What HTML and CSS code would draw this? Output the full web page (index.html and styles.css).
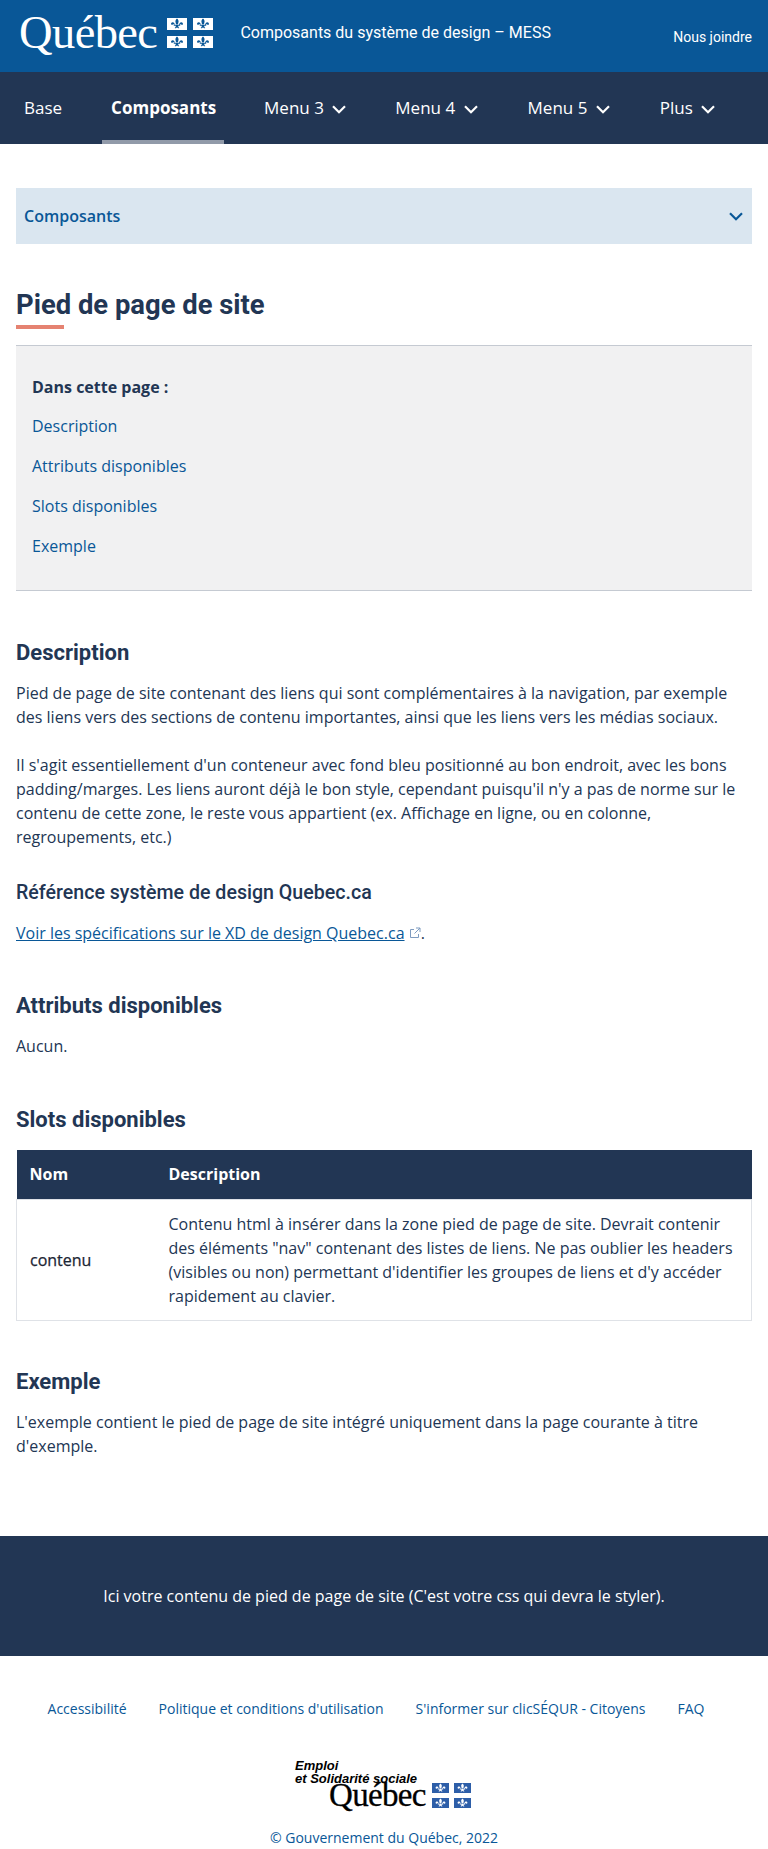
FILE: index.html
```html
<!DOCTYPE html>
<html lang="fr">
<head>
  <meta charset="UTF-8" />
  <meta name="viewport" content="width=device-width, initial-scale=1.0"/>
  <title>Pied de page de site</title>
  <link rel="stylesheet" href="styles.css">
</head>
<body>
  <svg class="defs" width="0" height="0" aria-hidden="true">
    <symbol id="fleur" viewBox="0 0 20 12">
      <path d="M10 .6c1.200 1 1.800 2.200 1.500 3.500-.2.900-.5 1.500-.5 2.200H9c0-.7-.3-1.300-.5-2.200C8.200 2.800 8.800 1.600 10 .6zM8 7.100c-.3-1.100-.8-2.500-1.900-2.800-1.100-.3-2.200.6-2 1.700.1.800 1 1.200 1.600.8-.2-.6.300-1 .8-.6.300.3.500.6.600.9zM12 7.100c.3-1.100.8-2.500 1.900-2.800 1.100-.3 2.200.6 2 1.700-.1.800-1 1.200-1.600.8.200-.6-.3-1-.8-.6-.3.300-.5.600-.6.900zM6.800 6.800h6.400v1h-2c0 1 .4 1.800 1.100 2.200-.9.500-1.800.2-2.300-.7-.5.900-1.400 1.200-2.300.7.700-.4 1.100-1.200 1.100-2.200h-2z"/>
    </symbol>
    <symbol id="chevron" viewBox="1 1 14 8.500">
      <path d="M2 2l6 6 6-6" fill="none" stroke="currentColor" stroke-width="2.200"/>
    </symbol>
  </svg>

  <header class="topbar">
    <a class="logo" href="#">
      <span class="logo-word">Québec</span>
      <span class="flag flag-white">
        <i><svg><use href="#fleur"/></svg></i><i><svg><use href="#fleur"/></svg></i>
        <i><svg><use href="#fleur"/></svg></i><i><svg><use href="#fleur"/></svg></i>
      </span>
    </a>
    <div class="site-title">Composants du système de design – MESS</div>
    <a class="contact" href="#">Nous joindre</a>
  </header>

  <nav class="mainnav">
    <a href="#" class="nav-base">Base</a>
    <a href="#" class="nav-active">Composants</a>
    <a href="#" class="nav-m3">Menu 3 <svg class="nav-chev"><use href="#chevron"/></svg></a>
    <a href="#" class="nav-m4">Menu 4 <svg class="nav-chev"><use href="#chevron"/></svg></a>
    <a href="#" class="nav-m5">Menu 5 <svg class="nav-chev"><use href="#chevron"/></svg></a>
    <a href="#" class="nav-plus">Plus <svg class="nav-chev"><use href="#chevron"/></svg></a>
  </nav>

  <main class="content">
    <div class="section-select">
      <span>Composants</span>
      <svg class="select-chev"><use href="#chevron"/></svg>
    </div>

    <h1>Pied de page de site</h1>

    <div class="toc">
      <p class="toc-title">Dans cette page :</p>
      <a href="#">Description</a>
      <a href="#">Attributs disponibles</a>
      <a href="#">Slots disponibles</a>
      <a href="#">Exemple</a>
    </div>

    <h2 class="h-desc">Description</h2>
    <p>Pied de page de site contenant des liens qui sont complémentaires à la navigation, par exemple des liens vers des sections de contenu importantes, ainsi que les liens vers les médias sociaux.</p>
    <p class="gap">Il s'agit essentiellement d'un conteneur avec fond bleu positionné au bon endroit, avec les bons padding/marges. Les liens auront déjà le bon style, cependant puisqu'il n'y a pas de norme sur le contenu de cette zone, le reste vous appartient (ex. Affichage en ligne, ou en colonne, regroupements, etc.)</p>

    <h3>Référence système de design Quebec.ca</h3>
    <p><a class="ext" href="#">Voir les spécifications sur le XD de design Quebec.ca</a>
      <svg class="ext-icon" viewBox="0 0 12 12"><path d="M9.500 7v3.500h-8v-8H5M7 1h4v4M11 1L5.500 6.500" fill="none" stroke="#7f9cc0" stroke-width="1"/></svg>.</p>

    <h2 class="h-attr">Attributs disponibles</h2>
    <p>Aucun.</p>

    <h2 class="h-slots">Slots disponibles</h2>
    <table class="slots">
      <thead>
        <tr><th class="col-name">Nom</th><th>Description</th></tr>
      </thead>
      <tbody>
        <tr>
          <td class="cell-name">contenu</td>
          <td>Contenu html à insérer dans la zone pied de page de site. Devrait contenir des éléments "nav" contenant des listes de liens. Ne pas oublier les headers (visibles ou non) permettant d'identifier les groupes de liens et d'y accéder rapidement au clavier.</td>
        </tr>
      </tbody>
    </table>

    <h2 class="h-ex">Exemple</h2>
    <p>L'exemple contient le pied de page de site intégré uniquement dans la page courante à titre d'exemple.</p>
  </main>

  <div class="site-footer">Ici votre contenu de pied de page de site (C'est votre css qui devra le styler).</div>

  <footer class="gov-footer">
    <div class="gov-links">
      <a href="#">Accessibilité</a>
      <a href="#">Politique et conditions d'utilisation</a>
      <a href="#">S'informer sur clicSÉQUR - Citoyens</a>
      <a href="#">FAQ</a>
    </div>
    <div class="gov-logo">
      <div class="gov-dept">Emploi<br>et Solidarité sociale</div>
      <div class="gov-brand">
        <span class="gov-word">Québec</span>
        <span class="flag flag-blue">
          <i><svg><use href="#fleur"/></svg></i><i><svg><use href="#fleur"/></svg></i>
          <i><svg><use href="#fleur"/></svg></i><i><svg><use href="#fleur"/></svg></i>
        </span>
      </div>
    </div>
    <div class="copyright">© Gouvernement du Québec, 2022</div>
  </footer>
</body>
</html>
```

FILE: styles.css
```css
* { box-sizing: border-box; }
body { margin: 0; font-family: "Open Sans", sans-serif; font-size: 16px; line-height: 24px; color: #223654; background: #fff; }
a { color: #095797; }
.defs { position: absolute; }

/* entete */
.topbar { height: 72px; background: #095797; color: #fff; display: flex; align-items: flex-start; padding: 0 16px 0 19px; }
.logo { display: flex; align-items: flex-start; color: #fff; text-decoration: none; }
.logo-word { font-family: "Liberation Serif", serif; font-size: 46.500px; line-height: 46px; margin-top: 10px; letter-spacing: -.6px; }
.flag { display: grid; grid-template-columns: 20px 20px; grid-auto-rows: 12px; gap: 6px; }
.flag i { display: block; }
.flag svg { display: block; width: 100%; height: 100%; }
.flag-white { margin: 18px 0 0 10px; }
.flag-white i { background: #fff; fill: #095797; }
.site-title { font-family: Roboto, sans-serif; font-size: 16px; line-height: 24px; margin: 21px 0 0 27px; }
.contact { font-family: Roboto, sans-serif; font-size: 14px; line-height: 20px; color: #fff; text-decoration: none; margin: 27px 0 0 auto; }

/* menu */
.mainnav { height: 72px; background: #223654; display: flex; align-items: center; font-size: 17px; }
.mainnav a { color: #fff; text-decoration: none; height: 72px; line-height: 72px; display: block; white-space: nowrap; }
.nav-base { margin-left: 24px; }
.mainnav .nav-active { margin-left: 40px; padding: 0 9px; width: 122px; font-weight: 700; border-bottom: 4px solid #919aa9; }
.nav-m3 { margin-left: 40px; }
.nav-m4 { margin-left: 49px; }
.nav-m5 { margin-left: 50px; }
.nav-plus { margin-left: 50px; }
.nav-chev { width: 14px; height: 9px; margin-left: 4px; color: #fff; }

/* contenu */
.content { padding: 44px 16px 0; }
.section-select { height: 56px; background: #dae6f0; color: #095797; font-weight: 600; display: flex; align-items: center; justify-content: space-between; padding: 0 9px 0 8px; }
.select-chev { width: 14px; height: 9px; color: #095797; }
h1 { font-family: Roboto, sans-serif; font-size: 27.400px; line-height: 36px; font-weight: 700; margin: 43px 0 0; position: relative; padding-bottom: 6px; }
h1::after { content: ""; display: block; position: absolute; left: 0; bottom: 0; width: 48px; height: 4px; background: #e58271; }
.toc { margin-top: 16px; background: #f1f1f2; border-top: 1px solid #c5cad2; border-bottom: 1px solid #c5cad2; padding: 29px 16px 33px; height: 246px; }
.toc-title { font-weight: 700; margin: 0; }
.toc a { display: block; text-decoration: none; margin-top: 16px; }
.toc .toc-title + a { margin-top: 15px; }
h2 { font-family: Roboto, sans-serif; font-size: 22px; line-height: 28px; font-weight: 700; margin: 0; }
h3 { font-family: Roboto, sans-serif; font-size: 19.600px; line-height: 28px; font-weight: 500; margin: 30px 0 0; }
p { margin: 0; }
h2 + p { margin-top: 14px; }
h3 + p { margin-top: 14px; }
.gap { margin-top: 24px; }
.h-desc { margin-top: 48px; }
.h-attr { margin-top: 47px; }
.h-slots { margin-top: 48px; }
.h-ex { margin-top: 47px; }
.ext-icon { width: 12px; height: 12px; }

/* tableau */
.slots { width: 100%; border-collapse: collapse; margin-top: 16px; }
.slots th { background: #223654; color: #fff; text-align: left; font-weight: 700; height: 49px; padding: 0 13px; }
.slots td { padding: 12px 13px; border: 1px solid #dfe2e7; border-left: 0; border-right: 0; color: #223654; }
.slots tbody tr { border-left: 1px solid #dfe2e7; border-right: 1px solid #dfe2e7; }
.col-name { width: 139px; }
.slots .cell-name { color: #1b2533; -webkit-text-stroke: .25px #1b2533; }

/* pieds de page */
.site-footer { margin-top: 78px; height: 120px; background: #223654; color: #fff; display: flex; align-items: center; justify-content: center; }
.gov-footer { text-align: center; font-size: 14px; color: #095797; }
.gov-links { display: flex; justify-content: center; gap: 32px; padding: 41px 16px 0 0; }
.gov-links a { text-decoration: none; }
.gov-logo { width: 180px; margin: 38px 0 0 295px; text-align: left; color: #000; }
.gov-dept { font-family: "Liberation Sans", sans-serif; font-weight: 700; font-style: italic; font-size: 13px; line-height: 13px; }
.gov-brand { display: flex; align-items: flex-start; margin-top: -5px; padding-left: 34px; }
.gov-word { font-family: "Liberation Serif", serif; font-size: 33px; line-height: 30px; letter-spacing: -.7px; -webkit-text-stroke: .3px #000; }
.flag-blue { grid-template-columns: 17px 17px; grid-auto-rows: 10px; gap: 5px; margin: 3px 0 0 6px; }
.flag-blue i { background: #2d5ea8; fill: #fff; }
.copyright { margin-top: 16px; }
```
